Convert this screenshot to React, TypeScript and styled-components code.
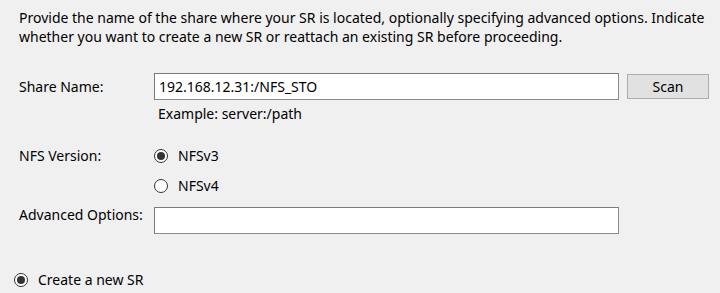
import React from "react";
import styled, { createGlobalStyle } from "styled-components";

const Global = createGlobalStyle`
  html, body { margin: 0; padding: 0; background: #f0f0f0; }
  body { font-family: "Noto Sans", "Open Sans", sans-serif; color: #000; }
`;

const Page = styled.div`
  width: 720px;
  height: 293px;
  overflow: hidden;
  box-sizing: border-box;
  padding: 8px 0 0 19px;
  font-size: 14px;
`;

const Intro = styled.p`
  margin: 0;
  line-height: 19px;
  width: 700px;
`;

const Form = styled.div`
  display: grid;
  grid-template-columns: 127px 465px 82px;
  column-gap: 8px;
  margin-top: 27px;
  align-items: center;
`;

const Label = styled.div<{ $row: number }>`
  grid-column: 1;
  grid-row: ${(p) => p.$row};
  line-height: 20px;
`;

const TextBox = styled.input`
  grid-column: 2;
  box-sizing: border-box;
  display: block;
  height: 27px;
  width: 465px;
  margin: 0;
  border: 1px solid #7a7a7a;
  border-right-color: #8a8a8a;
  border-bottom-color: #8a8a8a;
  background: #fff;
  font: inherit;
  font-size: 14px;
  padding: 0 4px 1px 4px;
  color: #000;
  outline: none;
`;

const Button = styled.button`
  grid-column: 3;
  box-sizing: border-box;
  height: 25px;
  margin: 0;
  border: 1px solid #adadad;
  background: #e1e1e1;
  font: inherit;
  font-size: 14px;
  color: #000;
  padding: 0 0 1px 0;
`;

const Hint = styled.div`
  grid-column: 2;
  padding-left: 4px;
  line-height: 20px;
  margin-top: 4px;
`;

const RadioRow = styled.label`
  display: flex;
  align-items: center;
  gap: 10px;
  line-height: 20px;
`;

const Cell = styled.div<{ $row: number; $top: number }>`
  grid-column: 2;
  grid-row: ${(p) => p.$row};
  margin-top: ${(p) => p.$top}px;
`;

const Circle = styled.span<{ $on: boolean }>`
  box-sizing: border-box;
  width: 14px;
  height: 14px;
  border-radius: 50%;
  border: 1px solid #333;
  background: #fff;
  display: inline-flex;
  align-items: center;
  justify-content: center;
  &::after {
    content: "";
    width: 8px;
    height: 8px;
    border-radius: 50%;
    background: ${(p) => (p.$on ? "#333" : "transparent")};
  }
`;

const Spacer = styled.div<{ $h: number }>`
  grid-column: 1 / 4;
  height: ${(p) => p.$h}px;
`;

const Bottom = styled.div`
  margin-top: 36px;
  margin-left: -5px;
`;

const Radio = ({ on, children }: { on: boolean; children: React.ReactNode }) => (
  <RadioRow>
    <Circle $on={on} />
    <span>{children}</span>
  </RadioRow>
);

export default function App() {
  return (
    <>
      <Global />
      <Page>
        <Intro>
          Provide the name of the share where your SR is located, optionally specifying advanced options. Indicate
          whether you want to create a new SR or reattach an existing SR before proceeding.
        </Intro>
        <Form>
          <Label $row={1}>Share Name:</Label>
          <TextBox defaultValue="192.168.12.31:/NFS_STO" />
          <Button>Scan</Button>
          <Hint>Example: server:/path</Hint>
          <Spacer $h={22} />
          <Label $row={4}>NFS Version:</Label>
          <Cell $row={4} $top={0}>
            <Radio on>NFSv3</Radio>
          </Cell>
          <Cell $row={5} $top={10}>
            <Radio on={false}>NFSv4</Radio>
          </Cell>
          <Label $row={6}>Advanced Options:</Label>
          <Cell $row={6} $top={11}>
            <TextBox />
          </Cell>
        </Form>
        <Bottom>
          <Radio on>Create a new SR</Radio>
        </Bottom>
      </Page>
    </>
  );
}
